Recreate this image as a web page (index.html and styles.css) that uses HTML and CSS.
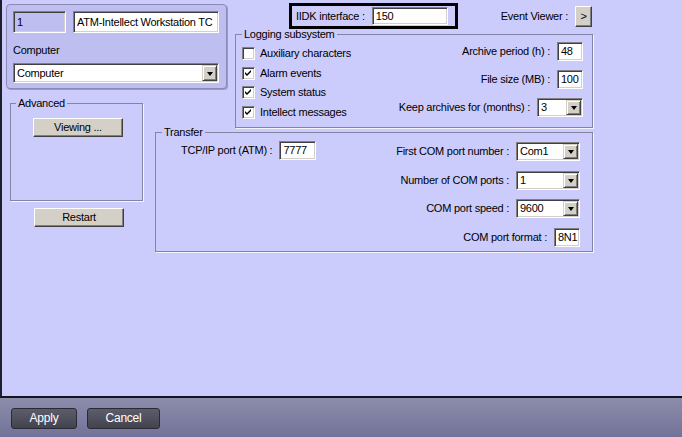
FILE: index.html
```html
<!DOCTYPE html>
<html lang="en">
<head>
    <meta charset="UTF-8">
    <meta name="viewport" content="width=device-width, initial-scale=1.0">
    <title>ATM settings</title>
    <link rel="stylesheet" href="styles.css">
</head>
<body>
    <div class="window">
        <div class="main">
            <div class="layout">
                <div class="card">
                    <div class="ids">
                        <div class="field num">1</div>
                        <div class="field name">ATM-Intellect Workstation TC</div>
                    </div>
                    <div class="caption">Computer</div>
                    <div class="combo wide"><span class="value">Computer</span><span class="arrow"></span></div>
                </div>

                <div class="right">
                    <div class="head">
                        <div class="iidk">
                            <span>IIDK interface :</span>
                            <div class="field iidk-field">150</div>
                        </div>
                        <div class="viewer">
                            <span>Event Viewer :</span>
                            <div class="btn small">&gt;</div>
                        </div>
                    </div>
                    <fieldset class="group logging">
                        <legend>Logging subsystem</legend>
                        <div class="body">
                            <div class="checks">
                                <div class="check"><span class="box"></span>Auxiliary characters</div>
                                <div class="check"><span class="box on"><svg viewBox="0 0 9 9"><polygon points="1,3 3,5 7,1 7,3 3,7 1,5"/></svg></span>Alarm events</div>
                                <div class="check"><span class="box on"><svg viewBox="0 0 9 9"><polygon points="1,3 3,5 7,1 7,3 3,7 1,5"/></svg></span>System status</div>
                                <div class="check"><span class="box on"><svg viewBox="0 0 9 9"><polygon points="1,3 3,5 7,1 7,3 3,7 1,5"/></svg></span>Intellect messages</div>
                            </div>
                            <div class="form">
                                <div class="row"><span>Archive period (h) :</span><div class="field tiny">48</div></div>
                                <div class="row"><span>File size (MB) :</span><div class="field tiny">100</div></div>
                                <div class="row"><span>Keep archives for (months) :</span><div class="combo short"><span class="value">3</span><span class="arrow"></span></div></div>
                            </div>
                        </div>
                    </fieldset>
                </div>

                <div class="side">
                    <fieldset class="group advanced">
                        <legend>Advanced</legend>
                        <div class="btn wide-btn viewing">Viewing ...</div>
                    </fieldset>
                    <div class="btn wide-btn restart">Restart</div>
                </div>

                <fieldset class="group transfer">
                    <legend>Transfer</legend>
                    <div class="body">
                        <div class="tcp"><span>TCP/IP port (ATM) :</span><div class="field port">7777</div></div>
                        <div class="form">
                            <div class="row"><span>First COM port number :</span><div class="combo mid"><span class="value">Com1</span><span class="arrow"></span></div></div>
                            <div class="row"><span>Number of COM ports :</span><div class="combo mid"><span class="value">1</span><span class="arrow"></span></div></div>
                            <div class="row"><span>COM port speed :</span><div class="combo mid"><span class="value">9600</span><span class="arrow"></span></div></div>
                            <div class="row"><span>COM port format :</span><div class="field tiny">8N1</div></div>
                        </div>
                    </div>
                </fieldset>
            </div>
        </div>
        <div class="footer">
            <div class="dark-btn apply">Apply</div>
            <div class="dark-btn cancel">Cancel</div>
        </div>
    </div>
</body>
</html>
```

FILE: styles.css
```css
body {
    margin: 0;
    font-family: "Liberation Sans", Arial, sans-serif;
    font-size: 11px;
    line-height: 13px;
    letter-spacing: -0.25px;
    color: #000;
}
.window {
    width: 682px;
    height: 437px;
    display: flex;
    flex-direction: column;
    background-color: #ccccfc;
}
.main {
    flex: 1;
    border-left: 2px solid #1e1e2c;
    border-bottom: 2px solid #14141e;
    padding-left: 4px;
}
.layout {
    display: grid;
    grid-template-columns: 149px 80px 358px;
    grid-template-rows: 92px 35px auto;
    grid-template-areas:
        "top top right"
        "side . right"
        "side xfer xfer";
}

/* sunken edit box */
.field {
    box-sizing: border-box;
    display: flex;
    align-items: center;
    padding: 0 2px 0 3px;
    background: #fff;
    border: 1px solid;
    border-color: #808080 #fff #fff #808080;
    box-shadow: inset 1px 1px 0 #404040, inset -1px -1px 0 #d4d0c8;
    white-space: nowrap;
    overflow: hidden;
}
.combo {
    box-sizing: border-box;
    display: flex;
    align-items: stretch;
    height: 19px;
    padding: 1px;
    background: #fff;
    border: 1px solid;
    border-color: #808080 #fff #fff #808080;
    box-shadow: inset 1px 1px 0 #404040, inset -1px -1px 0 #d4d0c8;
}
.combo .value {
    flex: 1;
    display: flex;
    align-items: center;
    padding-left: 2px;
}
.arrow {
    width: 15px;
    box-sizing: border-box;
    display: flex;
    align-items: center;
    justify-content: center;
    background: #d4d0c8;
    border: 1px solid;
    border-color: #d4d0c8 #404040 #404040 #d4d0c8;
    box-shadow: inset 1px 1px 0 #fff, inset -1px -1px 0 #808080;
}
.arrow::after {
    content: "";
    border-left: 3.5px solid transparent;
    border-right: 3.5px solid transparent;
    border-top: 4px solid #000;
    margin-top: 1px;
}
.btn {
    box-sizing: border-box;
    display: flex;
    align-items: center;
    justify-content: center;
    background: #d4d0c8;
    border: 1px solid;
    border-color: #fff #404040 #404040 #fff;
    box-shadow: inset -1px -1px 0 #808080;
}

/* top left panel */
.card {
    grid-area: top;
    margin: 4px 8px 0 0;
    height: 85px;
    box-sizing: border-box;
    padding: 6px 0 0 6px;
    border: 1px solid #8a8ab4;
    border-radius: 4px;
    background: #bebef0;
    box-shadow: 1px 1px 0 #9a9ac8;
}
.ids {
    display: flex;
    gap: 7px;
}
.ids .field {
    height: 22px;
}
.field.num {
    width: 53px;
    background: transparent;
}
.field.name {
    width: 146px;
}
.caption {
    margin-top: 11px;
}
.combo.wide {
    width: 206px;
    height: 20px;
    margin-top: 6px;
}

/* header + logging */
.right {
    grid-area: right;
}
.head {
    height: 29px;
    box-sizing: border-box;
    padding: 3px 1px 0 54px;
    display: flex;
    justify-content: space-between;
    align-items: flex-start;
}
.iidk {
    width: 169px;
    height: 26px;
    box-sizing: border-box;
    display: flex;
    align-items: center;
    gap: 7px;
    padding: 0 0 0 4px;
    border: 3px solid #000;
}
.iidk-field {
    width: 76px;
    height: 18px;
}
.viewer {
    height: 26px;
    display: flex;
    align-items: center;
    gap: 7px;
}
.btn.small {
    width: 17px;
    height: 21px;
}

.group {
    margin: 0;
    padding: 0;
    min-width: 0;
    border: 1px solid #8484a4;
    box-shadow: 1px 1px 0 #f4f4ff;
}
.group legend {
    padding: 0 2px;
    margin-left: 6px;
    line-height: 11px;
}
.body {
    display: flex;
    justify-content: space-between;
}
.logging .body {
    height: 87px;
}
.checks {
    padding: 4px 0 0 6px;
}
.check {
    height: 19.5px;
    display: flex;
    align-items: center;
    gap: 5px;
}
.box {
    width: 13px;
    height: 13px;
    box-sizing: border-box;
    display: flex;
    align-items: center;
    justify-content: center;
    background: #fff;
    border: 1px solid;
    border-color: #808080 #fff #fff #808080;
    box-shadow: inset 1px 1px 0 #404040, inset -1px -1px 0 #d4d0c8;
}
.box svg {
    width: 9px;
    height: 9px;
}
.form {
    display: flex;
    flex-direction: column;
    gap: 9px;
    padding: 2px 9px 0 0;
}
.row {
    display: flex;
    justify-content: flex-end;
    align-items: center;
    gap: 7px;
    white-space: nowrap;
}
.field.tiny {
    width: 26px;
    height: 19px;
}
.combo.short {
    width: 46px;
}

/* left column */
.side {
    grid-area: side;
}
.advanced {
    box-sizing: border-box;
    width: 133px;
    margin: 6px 0 0 4px;
}
.advanced legend {
    margin-left: 5px;
}
.advanced .viewing {
    margin: 9px 0 63px 22px;
}
.wide-btn {
    width: 90px;
    height: 19px;
}
.restart {
    margin: 7px 0 0 28px;
}

/* transfer */
.transfer {
    grid-area: xfer;
}
.transfer .body {
    height: 113px;
}
.tcp {
    display: flex;
    align-items: center;
    gap: 7px;
    padding: 3px 0 0 25px;
    align-self: flex-start;
    white-space: nowrap;
}
.field.port {
    width: 37px;
    height: 19px;
}
.transfer .form {
    gap: 9.5px;
    padding: 4px 12px 0 0;
}
.combo.mid {
    width: 64px;
}

/* bottom bar */
.footer {
    height: 39px;
    box-sizing: border-box;
    display: flex;
    gap: 10px;
    padding: 10px 0 0 11px;
    background: linear-gradient(#8c8cab, #73739a);
}
.dark-btn {
    height: 21px;
    box-sizing: border-box;
    display: flex;
    align-items: center;
    justify-content: center;
    color: #fff;
    font-size: 12px;
    border: 1px solid #2a2a34;
    border-radius: 3px;
    background: linear-gradient(#5c5c6c, #43434f);
}
.apply {
    width: 66px;
}
.cancel {
    width: 73px;
}
```
